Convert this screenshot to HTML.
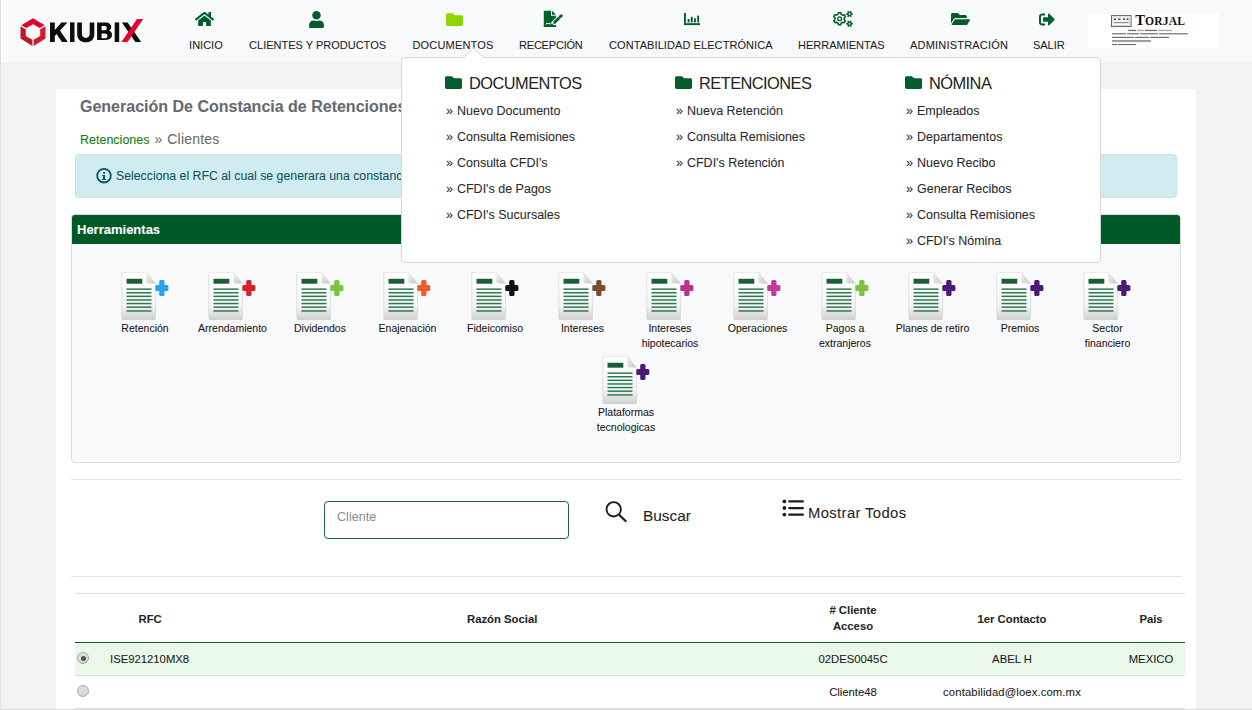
<!DOCTYPE html>
<html><head><meta charset="utf-8">
<style>
*{margin:0;padding:0;box-sizing:border-box}
html,body{width:1252px;height:710px;overflow:hidden}
body{background:#f2f2f2;font-family:"Liberation Sans",sans-serif;color:#222;position:relative;-webkit-text-stroke:0.07px}
.abs{position:absolute}
#nav{position:absolute;left:0;top:0;width:1252px;height:63px;background:#f8f9fa}
.nl{position:absolute;top:39px;font-size:11px;line-height:13px;color:#1f1f1f;white-space:nowrap}
#card{position:absolute;left:56px;top:89px;width:1140px;height:640px;background:#fff}
.title{position:absolute;left:80px;top:97px;font-size:16px;font-weight:bold;color:#666a70;white-space:nowrap;line-height:20px}
.bc{position:absolute;left:80px;top:130px;white-space:nowrap;line-height:18px}
.alert{position:absolute;left:75px;top:154px;width:1102px;height:44px;background:#d1ecf1;border:1px solid #bee5eb;border-radius:4px}
.alert .t{position:absolute;left:40px;top:13px;font-size:12.3px;color:#0c5460;white-space:nowrap;line-height:16px}
.panel{position:absolute;left:71px;top:214px;width:1110px;height:249px;border:1px solid #dcdcdc;border-radius:4px;background:#f8f9fa;overflow:hidden}
.panel .hd{position:absolute;left:0;top:0;right:0;height:29px;background:#005a27;color:#fff;font-weight:bold;font-size:13px;line-height:29px;padding-left:5px}
.tool{position:absolute;width:88px;text-align:center}
.tool svg{display:block;margin:0 auto;overflow:visible;position:relative;left:-1.5px}
.tool .l{font-size:10.5px;line-height:15px;color:#161616;margin-top:1px}
hr.s{position:absolute;border:0;border-top:1px solid #e4e4e4;height:0}
#dd{position:absolute;left:401px;top:57px;width:700px;height:206px;background:#fff;border:1px solid #d6d6d6;border-radius:4px}
.dh{position:absolute;-webkit-text-stroke:0;font-size:16.4px;letter-spacing:-0.55px;color:#222;line-height:20px;white-space:nowrap}
.di{position:absolute;font-size:12.5px;color:#2a2a2a;line-height:16px;white-space:nowrap}
.th{position:absolute;font-size:11.3px;font-weight:bold;color:#262626;line-height:16px;white-space:nowrap}
.td{position:absolute;font-size:11.3px;color:#1a1a1a;line-height:14px;white-space:nowrap}
.radio{position:absolute;left:77px;width:12px;height:12px;border-radius:50%;border:1px solid #a9a9a9;background:linear-gradient(#e2e2e2,#d6d6d6)}
.radio .dot{position:absolute;left:2.5px;top:2.5px;width:5px;height:5px;border-radius:50%;background:#555}
</style></head><body>

<div id="nav">
<svg class="abs" style="left:19px;top:17px" width="28" height="30" viewBox="19 17 28 30">
<polygon fill="#e3032a" points="21.3,25.2 33,18.2 44.7,25.2 39.8,28.1 33,24.3 26.2,28.1"/>
<polygon fill="#b81d25" points="20.5,26.2 25.8,29.2 25.8,35.9 32.4,39.7 32.4,46 20.5,38.6"/>
<polygon fill="#d31a2b" points="45.5,26.2 40.2,29.2 40.2,35.9 33.6,39.7 33.6,46 45.5,38.6"/>
</svg>
<svg class="abs" style="left:48px;top:17px" width="98" height="28" viewBox="48 17 98 28">
<path fill="#0d0d0d" d="M50,22.4h4.8v7.6l6.6-7.6h6l-7.4,8.2l7.8,11.4h-5.9l-5.3-8l-1.8,2v6h-4.8z"/>
<rect fill="#0d0d0d" x="70" y="22.4" width="4.5" height="19.6"/>
<path fill="#0d0d0d" d="M77.2,22.4h4.7v11.2c0,2.9,1.4,4.4,3.9,4.4s3.9-1.5,3.9-4.4V22.4h4.6v11.6c0,5.4-3.3,8.3-8.5,8.3s-8.6-2.9-8.6-8.3z"/>
<path fill="#0d0d0d" fill-rule="evenodd" d="M97.1,22.4h8.2c3.9,0,5.9,1.8,5.9,4.6c0,1.7-0.9,3-2.4,3.6c2,0.5,3.2,2,3.2,4.2c0,3.3-2.4,5.2-6.5,5.2h-8.4zM101.6,26.1v4.1h3.1c1.4,0,2.1-0.7,2.1-2s-0.7-2.1-2.1-2.1zM101.6,33.6v4.6h3.4c1.6,0,2.4-0.8,2.4-2.3s-0.8-2.3-2.4-2.3z"/>
<rect fill="#0d0d0d" x="114.7" y="22.4" width="4.5" height="19.6"/>
<path fill="#0d0d0d" d="M121.9,22.4h5.7l13.6,19.6h-5.9z"/>
<polygon fill="#e5062b" points="121.4,42 137,19 143.2,19 127.6,42"/>
</svg>

<svg class="abs" style="left:195px;top:11.2px" width="19" height="15" viewBox="0 0 576 480" preserveAspectRatio="none"><path fill="#035e2b" d="M280.4 148.3L96 300.1V464a16 16 0 0 0 16 16l112.1-.3a16 16 0 0 0 15.9-16V368a16 16 0 0 1 16-16h64a16 16 0 0 1 16 16v95.6a16 16 0 0 0 16 16.1L464 480a16 16 0 0 0 16-16V300L295.7 148.3a12.2 12.2 0 0 0-15.3 0zM571.6 251.5L488 182.6V44.1a12 12 0 0 0-12-12h-56a12 12 0 0 0-12 12v72.6L318.5 43a48 48 0 0 0-61 0L4.3 251.5a12 12 0 0 0-1.6 16.9l25.5 31A12 12 0 0 0 45.2 301l235.2-193.7a12.2 12.2 0 0 1 15.3 0L530.9 301a12 12 0 0 0 16.9-1.6l25.5-31a12 12 0 0 0-1.7-16.9z"/></svg>
<svg class="abs" style="left:308.5px;top:10.5px" width="15" height="17" viewBox="0 0 448 512"><path fill="#035e2b" d="M224 256c70.7 0 128-57.3 128-128S294.7 0 224 0 96 57.3 96 128s57.3 128 128 128zm89.6 32h-16.7c-22.2 10.2-46.9 16-72.9 16s-50.6-5.8-72.9-16h-16.7C60.2 288 0 348.2 0 422.4V464c0 26.5 21.5 48 48 48h352c26.5 0 48-21.5 48-48v-41.6c0-74.2-60.2-134.4-134.4-134.4z"/></svg>
<svg class="abs" style="left:446px;top:12.5px" width="17" height="13" viewBox="0 64 512 384"><path fill="#8fd500" d="M464 128H272l-64-64H48C21.5 64 0 85.5 0 112v288c0 26.5 21.5 48 48 48h416c26.5 0 48-21.5 48-48V176c0-26.5-21.5-48-48-48z"/></svg>
<svg class="abs" style="left:543px;top:10px" width="20" height="18" viewBox="543 10 20 18">
<path fill="#035e2b" d="M543.8,11.3q0,-0.5 0.5,-0.5H551V15.8H556V26.5q0,0.5 -0.5,0.5H544.3q-0.5,0 -0.5,-0.5z"/>
<path fill="#035e2b" d="M552,10.8L556,14.8H552z"/>
<path d="M552.8,24.2L562.5,14.5" stroke="#f8f9fa" stroke-width="5"/>
<rect x="543.8" y="25.3" width="12.2" height="1.7" fill="#035e2b"/>
<path d="M554.2,22.8L559.2,17.8" stroke="#035e2b" stroke-width="2.9"/>
<path d="M553.3,24.1L553.8,21.6L555.6,23.5z" fill="#035e2b"/>
<path d="M560.2,16.8L561.3,15.7" stroke="#035e2b" stroke-width="2.9" stroke-linecap="round"/>
<path fill="none" stroke="#f8f9fa" stroke-width="0.9" d="M545.6,24.6L547.2,22.9L547.9,24L549.2,23L549.9,24.1L551.6,23.5"/>
</svg>
<svg class="abs" style="left:683px;top:12px" width="18" height="14" viewBox="683 12 18 14">
<rect fill="#035e2b" x="684" y="13" width="1.9" height="12"/>
<rect fill="#035e2b" x="684" y="23.2" width="16" height="1.9"/>
<rect fill="#035e2b" x="687.6" y="19" width="1.9" height="3.4"/>
<rect fill="#035e2b" x="690.8" y="16.8" width="1.9" height="5.6"/>
<rect fill="#035e2b" x="694" y="18.4" width="1.9" height="4"/>
<rect fill="#035e2b" x="697.2" y="15.6" width="1.9" height="6.8"/>
</svg>
<svg class="abs" style="left:832px;top:10px" width="23" height="18" viewBox="832 10 23 18">
<path fill="none" stroke="#035e2b" stroke-width="1.55" stroke-linejoin="round" d="M838.13,14.18 L838.45,12.66 L840.75,12.66 L841.07,14.18 L842.78,15.17 L844.26,14.68 L845.41,16.68 L844.25,17.71 L844.25,19.69 L845.41,20.72 L844.26,22.72 L842.78,22.23 L841.07,23.22 L840.75,24.74 L838.45,24.74 L838.13,23.22 L836.42,22.23 L834.94,22.72 L833.79,20.72 L834.95,19.69 L834.95,17.71 L833.79,16.68 L834.94,14.68 L836.42,15.17Z"/>
<circle cx="839.6" cy="18.7" r="1.9" fill="none" stroke="#035e2b" stroke-width="1.3"/>
<path fill="#035e2b" fill-rule="evenodd" d="M850.00,11.65 L850.57,10.72 L851.81,11.44 L851.28,12.39 L851.78,13.26 L852.87,13.28 L852.87,14.72 L851.78,14.74 L851.28,15.61 L851.81,16.56 L850.57,17.28 L850.00,16.35 L849.00,16.35 L848.43,17.28 L847.19,16.56 L847.72,15.61 L847.22,14.74 L846.13,14.72 L846.13,13.28 L847.22,13.26 L847.72,12.39 L847.19,11.44 L848.43,10.72 L849.00,11.65Z M848.60,14.00 a0.90,0.90 0 1 1 1.80,0 a0.90,0.90 0 1 1 -1.80,0Z M850.00,21.45 L850.57,20.52 L851.81,21.24 L851.28,22.19 L851.78,23.06 L852.87,23.08 L852.87,24.52 L851.78,24.54 L851.28,25.41 L851.81,26.36 L850.57,27.08 L850.00,26.15 L849.00,26.15 L848.43,27.08 L847.19,26.36 L847.72,25.41 L847.22,24.54 L846.13,24.52 L846.13,23.08 L847.22,23.06 L847.72,22.19 L847.19,21.24 L848.43,20.52 L849.00,21.45Z M848.60,23.80 a0.90,0.90 0 1 1 1.80,0 a0.90,0.90 0 1 1 -1.80,0Z"/>
</svg>
<svg class="abs" style="left:950.8px;top:12.6px" width="19" height="12.3" viewBox="0 64 576 384" preserveAspectRatio="none"><path fill="#035e2b" d="M572.7 292.1L500.3 416.2A64 64 0 0 1 445 448H45c-18.5 0-30.1-20.1-20.7-36.1l72.4-124.2A64 64 0 0 1 152 256h400c18.5 0 30.1 20.1 20.7 36.1zM152 224h328v-48c0-26.5-21.5-48-48-48H272l-64-64H48C21.5 64 0 85.5 0 112v278l69.1-118.4C86.2 242.3 118 224 152 224z"/></svg>
<svg class="abs" style="left:1039px;top:12.5px" width="16" height="13" viewBox="0 64 512 384"><path fill="#035e2b" d="M497 273L329 441c-15 15-41 4.5-41-17v-96H152c-13.3 0-24-10.7-24-24v-96c0-13.3 10.7-24 24-24h136V88c0-21.4 25.9-32 41-17l168 168c9.3 9.4 9.3 24.6 0 34zM192 436v-40c0-6.6-5.4-12-12-12H96c-17.7 0-32-14.3-32-32V160c0-17.7 14.3-32 32-32h84c6.6 0 12-5.4 12-12V76c0-6.6-5.4-12-12-12H96c-53 0-96 43-96 96v192c0 53 43 96 96 96h84c6.6 0 12-5.4 12-12z"/></svg>

<div class="nl" style="left:189.1px">INICIO</div>
<div class="nl" style="left:249.1px">CLIENTES Y PRODUCTOS</div>
<div class="nl" style="left:412.4px;letter-spacing:0.2px">DOCUMENTOS</div>
<div class="nl" style="left:519.0px;letter-spacing:-0.2px">RECEPCIÓN</div>
<div class="nl" style="left:609.0px;letter-spacing:0.08px">CONTABILIDAD ELECTRÓNICA</div>
<div class="nl" style="left:798.0px">HERRAMIENTAS</div>
<div class="nl" style="left:910.0px;letter-spacing:0.2px">ADMINISTRACIÓN</div>
<div class="nl" style="left:1032.9px">SALIR</div>

<div class="abs" style="left:1088px;top:14px;width:131px;height:35px;background:#fff"></div>
<svg class="abs" style="left:1088px;top:14px" width="131" height="35" viewBox="1088 14 131 35">
<rect x="1111.5" y="15.6" width="19.6" height="11" fill="none" stroke="#555" stroke-width="0.9"/>
<rect x="1113" y="17" width="16.6" height="8.2" fill="#fafafa" stroke="#999" stroke-width="0.4"/>
<g fill="#444"><rect x="1114" y="18.5" width="2" height="1.5"/><rect x="1118" y="18.5" width="2.5" height="1.5"/><rect x="1123" y="18.5" width="2" height="1.5"/><rect x="1126.5" y="18.5" width="2" height="1.5"/><rect x="1114" y="22" width="14.5" height="1.2" opacity="0.6"/></g>
<text x="1135.3" y="25" font-family="Liberation Serif" font-weight="bold" font-size="14.6" fill="#111">T</text>
<text x="1145" y="25" font-family="Liberation Serif" font-weight="bold" font-size="11.6" fill="#111" letter-spacing="0.15">ORJAL</text>
<g fill="#333" opacity="0.7">
<rect x="1128" y="29.8" width="8" height="1.3"/><rect x="1137" y="29.8" width="7" height="1.3" opacity="0.6"/><rect x="1145" y="29.8" width="12" height="1.3"/><rect x="1158" y="29.8" width="14" height="1.3" opacity="0.6"/>
<rect x="1112" y="33.2" width="14" height="1.2"/><rect x="1127" y="33.2" width="12" height="1.2"/><rect x="1140" y="33.2" width="18" height="1.2"/><rect x="1159" y="33.2" width="29" height="1.2"/>
<rect x="1112" y="36.8" width="22" height="1.2"/><rect x="1135" y="36.8" width="14" height="1.2"/><rect x="1150" y="36.8" width="19" height="1.2"/>
<rect x="1112" y="40.3" width="39" height="1.1"/><rect x="1112" y="41.5" width="39" height="0.6" opacity="0.7"/>
<rect x="1112" y="44" width="5" height="1.1"/><rect x="1118" y="44" width="18" height="1.1"/>
</g>
</svg>
</div>

<div id="card"></div>
<div class="title">Generación De Constancia de Retenciones</div>
<div class="bc"><span style="font-size:12.5px;color:#0f7d0f">Retenciones</span><span style="font-size:14px;color:#6b6b6b;margin-left:5px">»</span><span style="font-size:14px;color:#6b6b6b;margin-left:5px;letter-spacing:0.2px">Clientes</span></div>
<div class="alert"><svg class="abs" style="left:19px;top:11px" width="18" height="18" viewBox="95 165 18 18"><circle cx="104" cy="174.7" r="6.8" fill="none" stroke="#0c5460" stroke-width="1.8"/><circle cx="104.1" cy="171.8" r="1.15" fill="#0c5460"/><path fill="#0c5460" d="M102.2,174h2.9v4h0.9v1.1h-3.9v-1.1h0.9v-2.9h-0.8z"/></svg><div class="t">Selecciona el RFC al cual se generara una constancia de retenciones</div></div>

<div class="panel"><div class="hd">Herramientas</div></div>
<svg width="0" height="0" style="position:absolute">
<defs>
<linearGradient id="dg" x1="0" y1="0" x2="0" y2="1"><stop offset="0" stop-color="#ffffff"/><stop offset="0.7" stop-color="#f4f4f4"/><stop offset="1" stop-color="#cfcfcf"/></linearGradient>
<linearGradient id="fg" x1="0" y1="0" x2="1" y2="1"><stop offset="0" stop-color="#f0f0f0"/><stop offset="1" stop-color="#c9c9c9"/></linearGradient>
<symbol id="doc" viewBox="0 0 48 48">
<path d="M1.8,2.2a2,2 0 0 1 2-2h22.6l9.2,11.6v34.2a2,2 0 0 1-2,2h-29.8a2,2 0 0 1-2-2z" fill="url(#dg)" stroke="#d2d2d2" stroke-width="0.6"/>
<path d="M26.4,0.2v9.4a2,2 0 0 0 2,2h7.2z" fill="url(#fg)"/>
<rect x="6.5" y="6.8" width="15.8" height="4.9" fill="#1b5e36"/>
<g fill="#2f7a50"><rect x="6.5" y="16.4" width="25" height="1.5"/><rect x="6.5" y="20" width="25" height="1.5"/><rect x="6.5" y="23.6" width="25" height="1.5"/><rect x="6.5" y="27.2" width="25" height="1.5"/><rect x="6.5" y="30.8" width="25" height="1.5"/><rect x="6.5" y="34.4" width="25" height="1.5"/><rect x="6.5" y="38.2" width="25" height="1.5"/></g>
</symbol>
</defs></svg>
<div class="tool" style="left:101.00px;top:272px"><svg width="48" height="48" viewBox="0 0 48 48"><use href="#doc"/><path fill="#2aa0e6" d="M39.2,9.6a1.5,1.5 0 0 1 1.5-1.5h2.3a1.5,1.5 0 0 1 1.5,1.5v3.3h2.4a1.5,1.5 0 0 1 1.5,1.5v3.2a1.5,1.5 0 0 1-1.5,1.5h-2.4v3.3a1.5,1.5 0 0 1-1.5,1.5h-2.3a1.5,1.5 0 0 1-1.5-1.5v-3.3h-2.4a1.5,1.5 0 0 1-1.5-1.5v-3.2a1.5,1.5 0 0 1 1.5-1.5h2.4z"/></svg><div class="l">Retención</div></div>
<div class="tool" style="left:188.50px;top:272px"><svg width="48" height="48" viewBox="0 0 48 48"><use href="#doc"/><path fill="#d3232b" d="M39.2,9.6a1.5,1.5 0 0 1 1.5-1.5h2.3a1.5,1.5 0 0 1 1.5,1.5v3.3h2.4a1.5,1.5 0 0 1 1.5,1.5v3.2a1.5,1.5 0 0 1-1.5,1.5h-2.4v3.3a1.5,1.5 0 0 1-1.5,1.5h-2.3a1.5,1.5 0 0 1-1.5-1.5v-3.3h-2.4a1.5,1.5 0 0 1-1.5-1.5v-3.2a1.5,1.5 0 0 1 1.5-1.5h2.4z"/></svg><div class="l">Arrendamiento</div></div>
<div class="tool" style="left:276.00px;top:272px"><svg width="48" height="48" viewBox="0 0 48 48"><use href="#doc"/><path fill="#7cc43a" d="M39.2,9.6a1.5,1.5 0 0 1 1.5-1.5h2.3a1.5,1.5 0 0 1 1.5,1.5v3.3h2.4a1.5,1.5 0 0 1 1.5,1.5v3.2a1.5,1.5 0 0 1-1.5,1.5h-2.4v3.3a1.5,1.5 0 0 1-1.5,1.5h-2.3a1.5,1.5 0 0 1-1.5-1.5v-3.3h-2.4a1.5,1.5 0 0 1-1.5-1.5v-3.2a1.5,1.5 0 0 1 1.5-1.5h2.4z"/></svg><div class="l">Dividendos</div></div>
<div class="tool" style="left:363.50px;top:272px"><svg width="48" height="48" viewBox="0 0 48 48"><use href="#doc"/><path fill="#f15a2a" d="M39.2,9.6a1.5,1.5 0 0 1 1.5-1.5h2.3a1.5,1.5 0 0 1 1.5,1.5v3.3h2.4a1.5,1.5 0 0 1 1.5,1.5v3.2a1.5,1.5 0 0 1-1.5,1.5h-2.4v3.3a1.5,1.5 0 0 1-1.5,1.5h-2.3a1.5,1.5 0 0 1-1.5-1.5v-3.3h-2.4a1.5,1.5 0 0 1-1.5-1.5v-3.2a1.5,1.5 0 0 1 1.5-1.5h2.4z"/></svg><div class="l">Enajenación</div></div>
<div class="tool" style="left:451.00px;top:272px"><svg width="48" height="48" viewBox="0 0 48 48"><use href="#doc"/><path fill="#111111" d="M39.2,9.6a1.5,1.5 0 0 1 1.5-1.5h2.3a1.5,1.5 0 0 1 1.5,1.5v3.3h2.4a1.5,1.5 0 0 1 1.5,1.5v3.2a1.5,1.5 0 0 1-1.5,1.5h-2.4v3.3a1.5,1.5 0 0 1-1.5,1.5h-2.3a1.5,1.5 0 0 1-1.5-1.5v-3.3h-2.4a1.5,1.5 0 0 1-1.5-1.5v-3.2a1.5,1.5 0 0 1 1.5-1.5h2.4z"/></svg><div class="l">Fideicomiso</div></div>
<div class="tool" style="left:538.50px;top:272px"><svg width="48" height="48" viewBox="0 0 48 48"><use href="#doc"/><path fill="#7b4b2a" d="M39.2,9.6a1.5,1.5 0 0 1 1.5-1.5h2.3a1.5,1.5 0 0 1 1.5,1.5v3.3h2.4a1.5,1.5 0 0 1 1.5,1.5v3.2a1.5,1.5 0 0 1-1.5,1.5h-2.4v3.3a1.5,1.5 0 0 1-1.5,1.5h-2.3a1.5,1.5 0 0 1-1.5-1.5v-3.3h-2.4a1.5,1.5 0 0 1-1.5-1.5v-3.2a1.5,1.5 0 0 1 1.5-1.5h2.4z"/></svg><div class="l">Intereses</div></div>
<div class="tool" style="left:626.00px;top:272px"><svg width="48" height="48" viewBox="0 0 48 48"><use href="#doc"/><path fill="#b3338f" d="M39.2,9.6a1.5,1.5 0 0 1 1.5-1.5h2.3a1.5,1.5 0 0 1 1.5,1.5v3.3h2.4a1.5,1.5 0 0 1 1.5,1.5v3.2a1.5,1.5 0 0 1-1.5,1.5h-2.4v3.3a1.5,1.5 0 0 1-1.5,1.5h-2.3a1.5,1.5 0 0 1-1.5-1.5v-3.3h-2.4a1.5,1.5 0 0 1-1.5-1.5v-3.2a1.5,1.5 0 0 1 1.5-1.5h2.4z"/></svg><div class="l">Intereses<br>hipotecarios</div></div>
<div class="tool" style="left:713.50px;top:272px"><svg width="48" height="48" viewBox="0 0 48 48"><use href="#doc"/><path fill="#c2399a" d="M39.2,9.6a1.5,1.5 0 0 1 1.5-1.5h2.3a1.5,1.5 0 0 1 1.5,1.5v3.3h2.4a1.5,1.5 0 0 1 1.5,1.5v3.2a1.5,1.5 0 0 1-1.5,1.5h-2.4v3.3a1.5,1.5 0 0 1-1.5,1.5h-2.3a1.5,1.5 0 0 1-1.5-1.5v-3.3h-2.4a1.5,1.5 0 0 1-1.5-1.5v-3.2a1.5,1.5 0 0 1 1.5-1.5h2.4z"/></svg><div class="l">Operaciones</div></div>
<div class="tool" style="left:801.00px;top:272px"><svg width="48" height="48" viewBox="0 0 48 48"><use href="#doc"/><path fill="#7cc43a" d="M39.2,9.6a1.5,1.5 0 0 1 1.5-1.5h2.3a1.5,1.5 0 0 1 1.5,1.5v3.3h2.4a1.5,1.5 0 0 1 1.5,1.5v3.2a1.5,1.5 0 0 1-1.5,1.5h-2.4v3.3a1.5,1.5 0 0 1-1.5,1.5h-2.3a1.5,1.5 0 0 1-1.5-1.5v-3.3h-2.4a1.5,1.5 0 0 1-1.5-1.5v-3.2a1.5,1.5 0 0 1 1.5-1.5h2.4z"/></svg><div class="l">Pagos a<br>extranjeros</div></div>
<div class="tool" style="left:888.50px;top:272px"><svg width="48" height="48" viewBox="0 0 48 48"><use href="#doc"/><path fill="#4d1a7c" d="M39.2,9.6a1.5,1.5 0 0 1 1.5-1.5h2.3a1.5,1.5 0 0 1 1.5,1.5v3.3h2.4a1.5,1.5 0 0 1 1.5,1.5v3.2a1.5,1.5 0 0 1-1.5,1.5h-2.4v3.3a1.5,1.5 0 0 1-1.5,1.5h-2.3a1.5,1.5 0 0 1-1.5-1.5v-3.3h-2.4a1.5,1.5 0 0 1-1.5-1.5v-3.2a1.5,1.5 0 0 1 1.5-1.5h2.4z"/></svg><div class="l">Planes de retiro</div></div>
<div class="tool" style="left:976.00px;top:272px"><svg width="48" height="48" viewBox="0 0 48 48"><use href="#doc"/><path fill="#4d1a7c" d="M39.2,9.6a1.5,1.5 0 0 1 1.5-1.5h2.3a1.5,1.5 0 0 1 1.5,1.5v3.3h2.4a1.5,1.5 0 0 1 1.5,1.5v3.2a1.5,1.5 0 0 1-1.5,1.5h-2.4v3.3a1.5,1.5 0 0 1-1.5,1.5h-2.3a1.5,1.5 0 0 1-1.5-1.5v-3.3h-2.4a1.5,1.5 0 0 1-1.5-1.5v-3.2a1.5,1.5 0 0 1 1.5-1.5h2.4z"/></svg><div class="l">Premios</div></div>
<div class="tool" style="left:1063.50px;top:272px"><svg width="48" height="48" viewBox="0 0 48 48"><use href="#doc"/><path fill="#4d1a7c" d="M39.2,9.6a1.5,1.5 0 0 1 1.5-1.5h2.3a1.5,1.5 0 0 1 1.5,1.5v3.3h2.4a1.5,1.5 0 0 1 1.5,1.5v3.2a1.5,1.5 0 0 1-1.5,1.5h-2.4v3.3a1.5,1.5 0 0 1-1.5,1.5h-2.3a1.5,1.5 0 0 1-1.5-1.5v-3.3h-2.4a1.5,1.5 0 0 1-1.5-1.5v-3.2a1.5,1.5 0 0 1 1.5-1.5h2.4z"/></svg><div class="l">Sector<br>financiero</div></div>
<div class="tool" style="left:582.00px;top:356px"><svg width="48" height="48" viewBox="0 0 48 48"><use href="#doc"/><path fill="#4d1a7c" d="M39.2,9.6a1.5,1.5 0 0 1 1.5-1.5h2.3a1.5,1.5 0 0 1 1.5,1.5v3.3h2.4a1.5,1.5 0 0 1 1.5,1.5v3.2a1.5,1.5 0 0 1-1.5,1.5h-2.4v3.3a1.5,1.5 0 0 1-1.5,1.5h-2.3a1.5,1.5 0 0 1-1.5-1.5v-3.3h-2.4a1.5,1.5 0 0 1-1.5-1.5v-3.2a1.5,1.5 0 0 1 1.5-1.5h2.4z"/></svg><div class="l">Plataformas<br>tecnologicas</div></div>


<hr class="s" style="left:71px;top:479px;width:1111px">
<hr class="s" style="left:71px;top:576px;width:1111px">

<div class="abs" style="left:324px;top:501px;width:245px;height:38px;border:1.3px solid #1a6636;border-radius:4px;background:#fff"></div>
<div class="abs" style="left:337px;top:510px;font-size:12.6px;color:#8f8f8f;line-height:14px">Cliente</div>
<svg class="abs" style="left:604px;top:500px" width="24" height="23" viewBox="604 500 24 23"><circle cx="613.7" cy="509.3" r="7.2" fill="none" stroke="#1e1e1e" stroke-width="1.9"/><path d="M619.3,515L625.6,521" stroke="#1e1e1e" stroke-width="2.3" stroke-linecap="round"/></svg>
<div class="abs" style="left:643px;top:507px;font-size:15.4px;color:#1e1e1e;line-height:18px">Buscar</div>
<svg class="abs" style="left:781px;top:499px" width="25" height="19" viewBox="781 499 25 19"><g fill="#1e1e1e"><circle cx="784.4" cy="501.4" r="1.9"/><circle cx="784.4" cy="508" r="1.9"/><circle cx="784.4" cy="514.6" r="1.9"/><rect x="788.3" y="500.3" width="15.5" height="2.3" rx="0.6"/><rect x="788.3" y="506.9" width="15.5" height="2.3" rx="0.6"/><rect x="788.3" y="513.5" width="15.5" height="2.3" rx="0.6"/></g></svg>
<div class="abs" style="left:808px;top:503.6px;font-size:14.8px;letter-spacing:0.38px;color:#1e1e1e;line-height:18px">Mostrar Todos</div>

<div class="abs" style="left:75px;top:593px;width:1110px;height:1px;background:#e0e0e0"></div>
<div class="abs" style="left:75px;top:642px;width:1110px;height:1.5px;background:#0f5a2c"></div>
<div class="abs" style="left:75px;top:643px;width:1110px;height:32px;background:#e9f8e9"></div>
<div class="abs" style="left:75px;top:675px;width:1110px;height:1px;background:#dedede"></div>
<div class="abs" style="left:75px;top:708px;width:1110px;height:1px;background:#dedede"></div>
<div class="abs" style="left:0;top:709px;width:1252px;height:1px;background:#dcdcdc"></div>
<div class="abs" style="left:0;top:0;width:1px;height:710px;background:#e0e0e0"></div>
<div class="th" style="left:138.5px;top:610.5px">RFC</div>
<div class="th" style="left:467px;top:610.5px">Razón Social</div>
<div class="th" style="left:803px;top:602px;width:100px;text-align:center">&#35; Cliente<br>Acceso</div>
<div class="th" style="left:962px;top:610.5px;width:100px;text-align:center">1er Contacto</div>
<div class="th" style="left:1101px;top:610.5px;width:100px;text-align:center">Pais</div>
<div class="radio" style="top:652px"><div class="dot"></div></div>
<div class="radio" style="top:685px"></div>
<div class="td" style="left:110px;top:652px">ISE921210MX8</div>
<div class="td" style="left:803px;top:652px;width:100px;text-align:center">02DES0045C</div>
<div class="td" style="left:962px;top:652px;width:100px;text-align:center">ABEL H</div>
<div class="td" style="left:1101px;top:652px;width:100px;text-align:center">MEXICO</div>
<div class="td" style="left:803px;top:685px;width:100px;text-align:center">Cliente48</div>
<div class="td" style="left:912px;top:685px;width:200px;text-align:center;letter-spacing:0.11px">contabilidad@loex.com.mx</div>


<div id="dd"></div>
<svg class="abs" style="left:462px;top:47px" width="22" height="12" viewBox="462 47 22 12"><path d="M462.5,58.5L473.5,48L484.5,58.5" fill="#fff" stroke="#d6d6d6" stroke-width="1"/><rect x="462" y="58" width="22" height="2" fill="#fff"/></svg>
<svg class="abs" style="left:445px;top:76px" width="17" height="13" viewBox="0 64 512 384"><path fill="#035e2b" d="M464 128H272l-64-64H48C21.5 64 0 85.5 0 112v288c0 26.5 21.5 48 48 48h416c26.5 0 48-21.5 48-48V176c0-26.5-21.5-48-48-48z"/></svg><svg class="abs" style="left:675px;top:76px" width="17" height="13" viewBox="0 64 512 384"><path fill="#035e2b" d="M464 128H272l-64-64H48C21.5 64 0 85.5 0 112v288c0 26.5 21.5 48 48 48h416c26.5 0 48-21.5 48-48V176c0-26.5-21.5-48-48-48z"/></svg><svg class="abs" style="left:905px;top:76px" width="17" height="13" viewBox="0 64 512 384"><path fill="#035e2b" d="M464 128H272l-64-64H48C21.5 64 0 85.5 0 112v288c0 26.5 21.5 48 48 48h416c26.5 0 48-21.5 48-48V176c0-26.5-21.5-48-48-48z"/></svg>
<div class="dh" style="left:469px;top:73px">DOCUMENTOS</div>
<div class="dh" style="left:699px;top:73px">RETENCIONES</div>
<div class="dh" style="left:929px;top:73px">NÓMINA</div>
<div class="di" style="left:446px;top:103px">»<span style="margin-left:4px">Nuevo Documento</span></div>
<div class="di" style="left:446px;top:129px">»<span style="margin-left:4px">Consulta Remisiones</span></div>
<div class="di" style="left:446px;top:155px">»<span style="margin-left:4px">Consulta CFDI's</span></div>
<div class="di" style="left:446px;top:181px">»<span style="margin-left:4px">CFDI's de Pagos</span></div>
<div class="di" style="left:446px;top:207px">»<span style="margin-left:4px">CFDI's Sucursales</span></div>
<div class="di" style="left:676px;top:103px">»<span style="margin-left:4px">Nueva Retención</span></div>
<div class="di" style="left:676px;top:129px">»<span style="margin-left:4px">Consulta Remisiones</span></div>
<div class="di" style="left:676px;top:155px">»<span style="margin-left:4px">CFDI's Retención</span></div>
<div class="di" style="left:906px;top:103px">»<span style="margin-left:4px">Empleados</span></div>
<div class="di" style="left:906px;top:129px">»<span style="margin-left:4px">Departamentos</span></div>
<div class="di" style="left:906px;top:155px">»<span style="margin-left:4px">Nuevo Recibo</span></div>
<div class="di" style="left:906px;top:181px">»<span style="margin-left:4px">Generar Recibos</span></div>
<div class="di" style="left:906px;top:207px">»<span style="margin-left:4px">Consulta Remisiones</span></div>
<div class="di" style="left:906px;top:233px">»<span style="margin-left:4px">CFDI's Nómina</span></div>


</body></html>
